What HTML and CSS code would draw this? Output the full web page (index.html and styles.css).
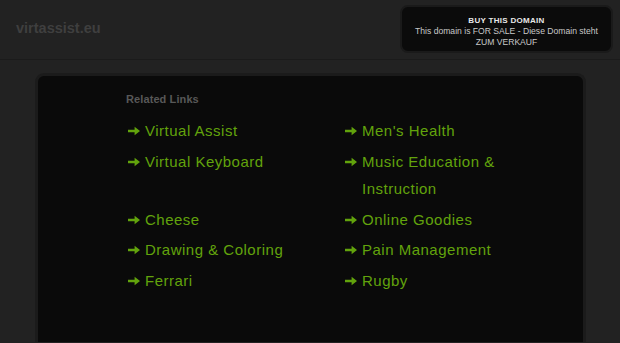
FILE: index.html
```html
<!DOCTYPE html>
<html>
<head>
<meta charset="utf-8">
<link rel="stylesheet" href="styles.css">
</head>
<body>
<header class="header">
  <div class="logo">virtassist.eu</div>
  <div class="buy">
    <div class="buy-title">BUY THIS DOMAIN</div>
    <div class="buy-text">This domain is FOR SALE - Diese Domain steht ZUM VERKAUF</div>
  </div>
</header>
<main class="panel">
  <div class="related">
    <div class="related-title">Related Links</div>
    <ul class="links">
      <li><svg class="arrow" viewBox="0 0 12 10"><path d="M0 3.7h6.6V0.8L12 5l-5.4 4.2V6.3H0z"/></svg><span>Virtual Assist</span></li>
      <li><svg class="arrow" viewBox="0 0 12 10"><path d="M0 3.7h6.6V0.8L12 5l-5.4 4.2V6.3H0z"/></svg><span>Men's Health</span></li>
      <li><svg class="arrow" viewBox="0 0 12 10"><path d="M0 3.7h6.6V0.8L12 5l-5.4 4.2V6.3H0z"/></svg><span>Virtual Keyboard</span></li>
      <li><svg class="arrow" viewBox="0 0 12 10"><path d="M0 3.7h6.6V0.8L12 5l-5.4 4.2V6.3H0z"/></svg><span>Music Education &amp;<br>Instruction</span></li>
      <li><svg class="arrow" viewBox="0 0 12 10"><path d="M0 3.7h6.6V0.8L12 5l-5.4 4.2V6.3H0z"/></svg><span>Cheese</span></li>
      <li><svg class="arrow" viewBox="0 0 12 10"><path d="M0 3.7h6.6V0.8L12 5l-5.4 4.2V6.3H0z"/></svg><span>Online Goodies</span></li>
      <li><svg class="arrow" viewBox="0 0 12 10"><path d="M0 3.7h6.6V0.8L12 5l-5.4 4.2V6.3H0z"/></svg><span>Drawing &amp; Coloring</span></li>
      <li><svg class="arrow" viewBox="0 0 12 10"><path d="M0 3.7h6.6V0.8L12 5l-5.4 4.2V6.3H0z"/></svg><span>Pain Management</span></li>
      <li><svg class="arrow" viewBox="0 0 12 10"><path d="M0 3.7h6.6V0.8L12 5l-5.4 4.2V6.3H0z"/></svg><span>Ferrari</span></li>
      <li><svg class="arrow" viewBox="0 0 12 10"><path d="M0 3.7h6.6V0.8L12 5l-5.4 4.2V6.3H0z"/></svg><span>Rugby</span></li>
    </ul>
  </div>
</main>
</body>
</html>
```
FILE: styles.css
```css
html, body {
  margin: 0;
  padding: 0;
  height: 100%;
  overflow: hidden;
}
body {
  background: #222222;
  font-family: "Liberation Sans", Arial, sans-serif;
}
.header {
  height: 60px;
  border-bottom: 1px solid #1b1b1b;
  display: flex;
  justify-content: space-between;
  align-items: flex-start;
  padding: 0 7px 0 16px;
  box-sizing: border-box;
}
.logo {
  margin-top: 20px;
  font-size: 14.5px;
  font-weight: bold;
  color: #3f3f3f;
}
.buy {
  margin-top: 5px;
  width: 213px;
  height: 48px;
  box-sizing: border-box;
  background: #0b0b0b;
  border: 2px solid #1a1a1a;
  border-radius: 8px;
  text-align: center;
  padding: 9px 6px 0;
}
.buy-title {
  font-size: 8px;
  font-weight: bold;
  color: #e8e8e8;
  letter-spacing: 0.3px;
  line-height: 10px;
}
.buy-text {
  font-size: 8.6px;
  color: #c8c8c8;
  line-height: 11px;
  margin-top: 0;
}
.panel {
  margin: 13px 34px 0 35px;
  height: 269px;
  background: #0a0a0a;
  border: 3px solid #1b1b1b;
  border-bottom: none;
  border-radius: 9px 9px 0 0;
  box-sizing: border-box;
  padding: 17px 0 0 88px;
}
.related-title {
  font-size: 11px;
  font-weight: bold;
  color: #585858;
  letter-spacing: 0.1px;
  line-height: 13px;
}
.links {
  list-style: none;
  margin: 11px 0 0;
  padding: 0;
  display: grid;
  grid-template-columns: 217px 217px;
  row-gap: 3px;
}
.links li {
  display: flex;
  align-items: flex-start;
  font-size: 15px;
  letter-spacing: 0.5px;
  line-height: 27.5px;
  color: #62a30c;
}
.arrow {
  width: 12px;
  height: 10px;
  fill: #62a30c;
  margin: 9px 5px 0 2px;
  flex: none;
}
```
